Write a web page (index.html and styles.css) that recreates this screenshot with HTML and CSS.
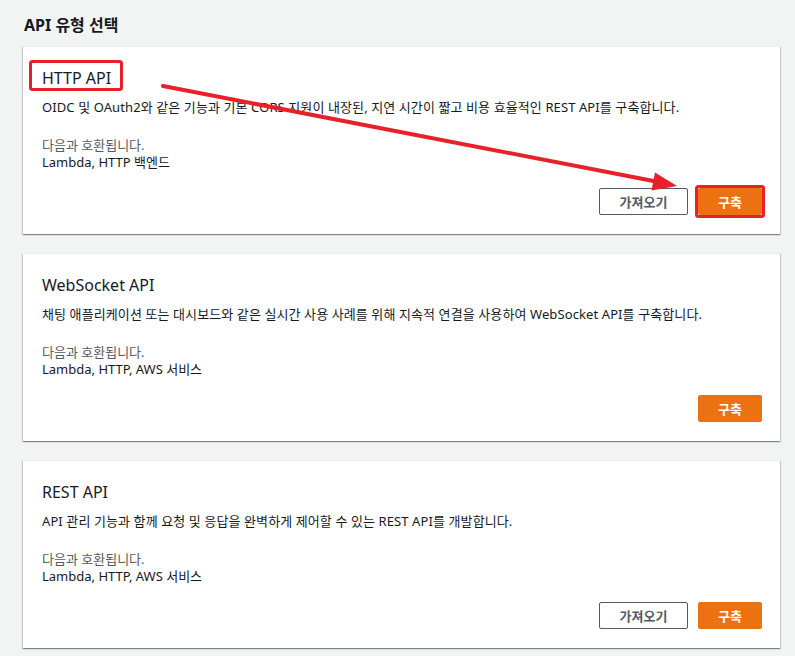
FILE: index.html
```html
<!DOCTYPE html>
<html lang="ko">
<head>
<meta charset="utf-8">
<link rel="stylesheet" href="styles.css">
</head>
<body>
<div class="page">
  <h2 class="heading">API 유형 선택</h2>
  <div class="cards">
    <div class="card">
      <div class="card-title">HTTP API</div>
      <div class="card-desc">OIDC 및 OAuth2와 같은 기능과 기본 CORS 지원이 내장된, 지연 시간이 짧고 비용 효율적인 REST API를 구축합니다.</div>
      <div class="compat-label">다음과 호환됩니다.</div>
      <div class="compat-value">Lambda, HTTP 백엔드</div>
      <div class="actions">
        <button class="btn btn-normal">가져오기</button>
        <button class="btn btn-primary">구축</button>
      </div>
    </div>
    <div class="card">
      <div class="card-title">WebSocket API</div>
      <div class="card-desc">채팅 애플리케이션 또는 대시보드와 같은 실시간 사용 사례를 위해 지속적 연결을 사용하여 WebSocket API를 구축합니다.</div>
      <div class="compat-label">다음과 호환됩니다.</div>
      <div class="compat-value">Lambda, HTTP, AWS 서비스</div>
      <div class="actions">
        <button class="btn btn-primary">구축</button>
      </div>
    </div>
    <div class="card">
      <div class="card-title">REST API</div>
      <div class="card-desc">API 관리 기능과 함께 요청 및 응답을 완벽하게 제어할 수 있는 REST API를 개발합니다.</div>
      <div class="compat-label">다음과 호환됩니다.</div>
      <div class="compat-value">Lambda, HTTP, AWS 서비스</div>
      <div class="actions">
        <button class="btn btn-normal">가져오기</button>
        <button class="btn btn-primary">구축</button>
      </div>
    </div>
  </div>
</div>
<svg class="annotations" width="795" height="656" viewBox="0 0 795 656" xmlns="http://www.w3.org/2000/svg">
  <rect x="30.5" y="61.5" width="91" height="28" rx="2" fill="none" stroke="#e8202a" stroke-width="3"/>
  <rect x="696.5" y="186.5" width="67" height="30" rx="2" fill="none" stroke="#e8202a" stroke-width="3"/>
  <line x1="163" y1="86" x2="656" y2="181.5" stroke="#e8202a" stroke-width="4" stroke-linecap="round"/>
  <polygon points="677,186 655,172.5 651.5,190.5" fill="#e8202a"/>
</svg>
</body>
</html>
```
FILE: styles.css
```css
html, body {
  margin: 0;
  padding: 0;
  background: #f2f3f3;
}
body {
  font-family: "Noto Sans", "Noto Sans CJK KR", sans-serif;
  color: #16191f;
  width: 795px;
  height: 656px;
  overflow: hidden;
  position: relative;
}
.page {
  padding: 14px 15px 0 23px;
}
.heading {
  margin: 0 0 10px 1px;
  font-size: 16px;
  font-weight: 700;
  line-height: 22px;
  color: #16191f;
}
.cards {
  display: flex;
  flex-direction: column;
  gap: 19px;
}
.card {
  background: #fff;
  border-top: 1px solid #eaeded;
  box-shadow: 0 1px 1px 0 rgba(0, 28, 36, 0.3), 1px 1px 1px 0 rgba(0, 28, 36, 0.15), -1px 1px 1px 0 rgba(0, 28, 36, 0.15);
  height: 188px;
  box-sizing: border-box;
  padding: 18px 18px 19px 19px;
  display: flex;
  flex-direction: column;
}
.card-title {
  font-size: 16px;
  line-height: 26px;
  color: #16191f;
}
.card-desc {
  margin-top: 7px;
  font-size: 13px;
  line-height: 18px;
  letter-spacing: 0.1px;
}
.compat-label {
  margin-top: 21px;
  font-size: 13px;
  line-height: 17px;
  color: #545b64;
}
.compat-value {
  font-size: 13px;
  line-height: 17px;
}
.actions {
  margin-top: auto;
  display: flex;
  justify-content: flex-end;
  gap: 10px;
}
.btn {
  font-family: "Noto Sans", "Noto Sans CJK KR", sans-serif;
  font-size: 13px;
  font-weight: 600;
  height: 27px;
  border-radius: 2px;
  padding: 0;
  cursor: pointer;
}
.btn-normal {
  width: 89px;
  background: #fff;
  border: 1px solid #545b64;
  color: #545b64;
}
.btn-primary {
  width: 64px;
  background: #ec7211;
  border: 1px solid #ec7211;
  color: #fff;
}
.annotations {
  position: absolute;
  left: 0;
  top: 0;
  pointer-events: none;
}
```
